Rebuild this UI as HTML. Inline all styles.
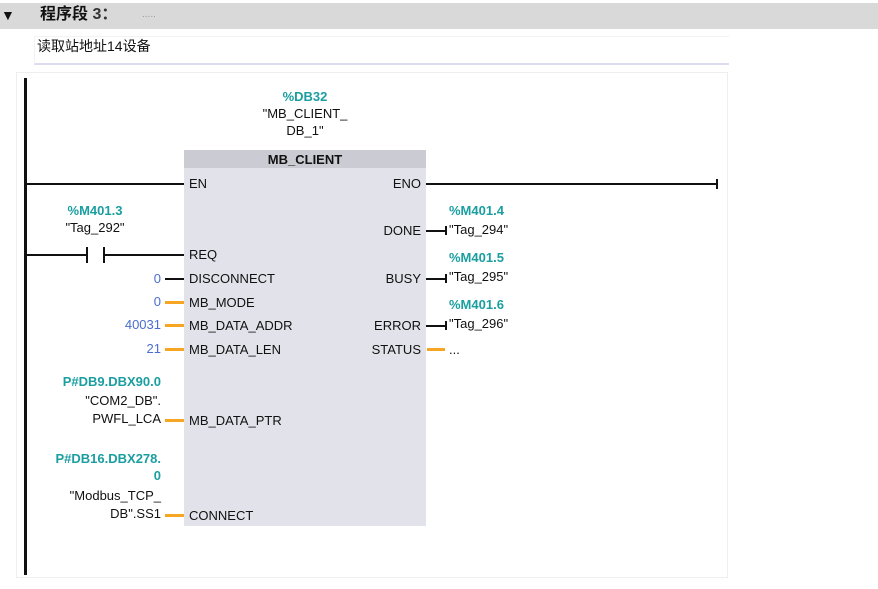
<!DOCTYPE html>
<html><head><meta charset="utf-8"><style>
body{margin:0;width:878px;height:589px;background:#fff;position:relative;overflow:hidden;font-family:"Liberation Sans","Noto Sans CJK SC",sans-serif;font-size:13px;color:#111}
.a{position:absolute;white-space:nowrap;line-height:16px}
.r{text-align:right}
.c{text-align:center}
.t{color:#1a9ea0;font-weight:bold}
.b{color:#4a6ed0}
.h{position:absolute;height:2px;background:#111}
.o{position:absolute;height:3px;background:#f6a623}
</style></head><body>
<div style="position:absolute;left:0;top:3px;width:878px;height:26px;background:#d9d9d9"></div>
<div class="a" style="left:1px;top:7px;font-size:14px">▼</div>
<div class="a" style="left:40px;top:7px;font-size:16px;font-weight:bold">程序段 <span style="color:#333">3：</span></div>
<div class="a" style="left:142px;top:7px;color:#999;font-size:10px">.....</div>
<div style="position:absolute;left:34px;top:36px;width:694px;height:26px;border-top:1px solid #f2f2f2;border-left:1px solid #f2f2f2;border-bottom:2px solid #dcdcf0"></div>
<div class="a" style="left:37px;top:38px;font-size:14px">读取站地址14设备</div>
<div style="position:absolute;left:16px;top:72px;width:710px;height:504px;border:1px solid #eee"></div>
<div style="position:absolute;left:24px;top:78px;width:3px;height:497px;background:#111"></div>
<div class="a t c" style="left:240px;top:89px;width:130px">%DB32</div>
<div class="a c" style="left:240px;top:106px;width:130px">"MB_CLIENT_</div>
<div class="a c" style="left:240px;top:123px;width:130px">DB_1"</div>
<div style="position:absolute;left:184px;top:150px;width:242px;height:376px;background:#e2e2ea"></div>
<div style="position:absolute;left:184px;top:150px;width:242px;height:18px;background:#cbcbd3"></div>
<div class="a c" style="left:184px;top:152px;width:242px;font-weight:bold">MB_CLIENT</div>
<div class="h" style="left:27px;top:183px;width:157px"></div>
<div class="h" style="left:426px;top:183px;width:292px"></div>
<div style="position:absolute;left:716px;top:179px;width:2px;height:10px;background:#111"></div>
<div class="a" style="left:189px;top:176px">EN</div>
<div class="a r" style="left:340px;top:176px;width:81px">ENO</div>
<div class="a t c" style="left:40px;top:203px;width:110px">%M401.3</div>
<div class="a c" style="left:40px;top:220px;width:110px">"Tag_292"</div>
<div class="h" style="left:27px;top:254px;width:60px"></div>
<div style="position:absolute;left:86px;top:247px;width:2px;height:16px;background:#111"></div>
<div style="position:absolute;left:103px;top:247px;width:2px;height:16px;background:#111"></div>
<div class="h" style="left:104px;top:254px;width:80px"></div>
<div class="a" style="left:189px;top:247px">REQ</div>
<div class="a r b" style="left:100px;top:271px;width:61px">0</div><div class="h" style="left:165px;top:278px;width:19px"></div>
<div class="a" style="left:189px;top:271px">DISCONNECT</div>
<div class="a r b" style="left:100px;top:294px;width:61px">0</div><div class="o" style="left:165px;top:301px;width:19px"></div>
<div class="a" style="left:189px;top:295px">MB_MODE</div>
<div class="a r b" style="left:100px;top:317px;width:61px">40031</div><div class="o" style="left:165px;top:324px;width:19px"></div>
<div class="a" style="left:189px;top:318px">MB_DATA_ADDR</div>
<div class="a r b" style="left:100px;top:341px;width:61px">21</div><div class="o" style="left:165px;top:348px;width:19px"></div>
<div class="a" style="left:189px;top:342px">MB_DATA_LEN</div>
<div class="a r t" style="left:20px;top:374px;width:141px">P#DB9.DBX90.0</div>
<div class="a r" style="left:20px;top:393px;width:141px">"COM2_DB".</div>
<div class="a r" style="left:20px;top:411px;width:141px">PWFL_LCA</div>
<div class="o" style="left:165px;top:419px;width:19px"></div>
<div class="a" style="left:189px;top:413px">MB_DATA_PTR</div>
<div class="a r t" style="left:20px;top:451px;width:141px">P#DB16.DBX278.</div>
<div class="a r t" style="left:20px;top:468px;width:141px">0</div>
<div class="a r" style="left:20px;top:488px;width:141px">"Modbus_TCP_</div>
<div class="a r" style="left:20px;top:506px;width:141px">DB".SS1</div>
<div class="o" style="left:165px;top:514px;width:19px"></div>
<div class="a" style="left:189px;top:508px">CONNECT</div>
<div class="a r" style="left:340px;top:223px;width:81px">DONE</div>
<div class="h" style="left:426px;top:230px;width:20px"></div><div style="position:absolute;left:445px;top:226px;width:2px;height:9px;background:#111"></div>
<div class="a t" style="left:449px;top:203px">%M401.4</div>
<div class="a" style="left:449px;top:222px">"Tag_294"</div>
<div class="a r" style="left:340px;top:271px;width:81px">BUSY</div>
<div class="h" style="left:426px;top:278px;width:20px"></div><div style="position:absolute;left:445px;top:274px;width:2px;height:9px;background:#111"></div>
<div class="a t" style="left:449px;top:250px">%M401.5</div>
<div class="a" style="left:449px;top:269px">"Tag_295"</div>
<div class="a r" style="left:340px;top:318px;width:81px">ERROR</div>
<div class="h" style="left:426px;top:325px;width:20px"></div><div style="position:absolute;left:445px;top:321px;width:2px;height:9px;background:#111"></div>
<div class="a t" style="left:449px;top:297px">%M401.6</div>
<div class="a" style="left:449px;top:316px">"Tag_296"</div>
<div class="a r" style="left:340px;top:342px;width:81px">STATUS</div>
<div class="o" style="left:427px;top:348px;width:18px"></div>
<div class="a" style="left:449px;top:342px">...</div>
</body></html>
